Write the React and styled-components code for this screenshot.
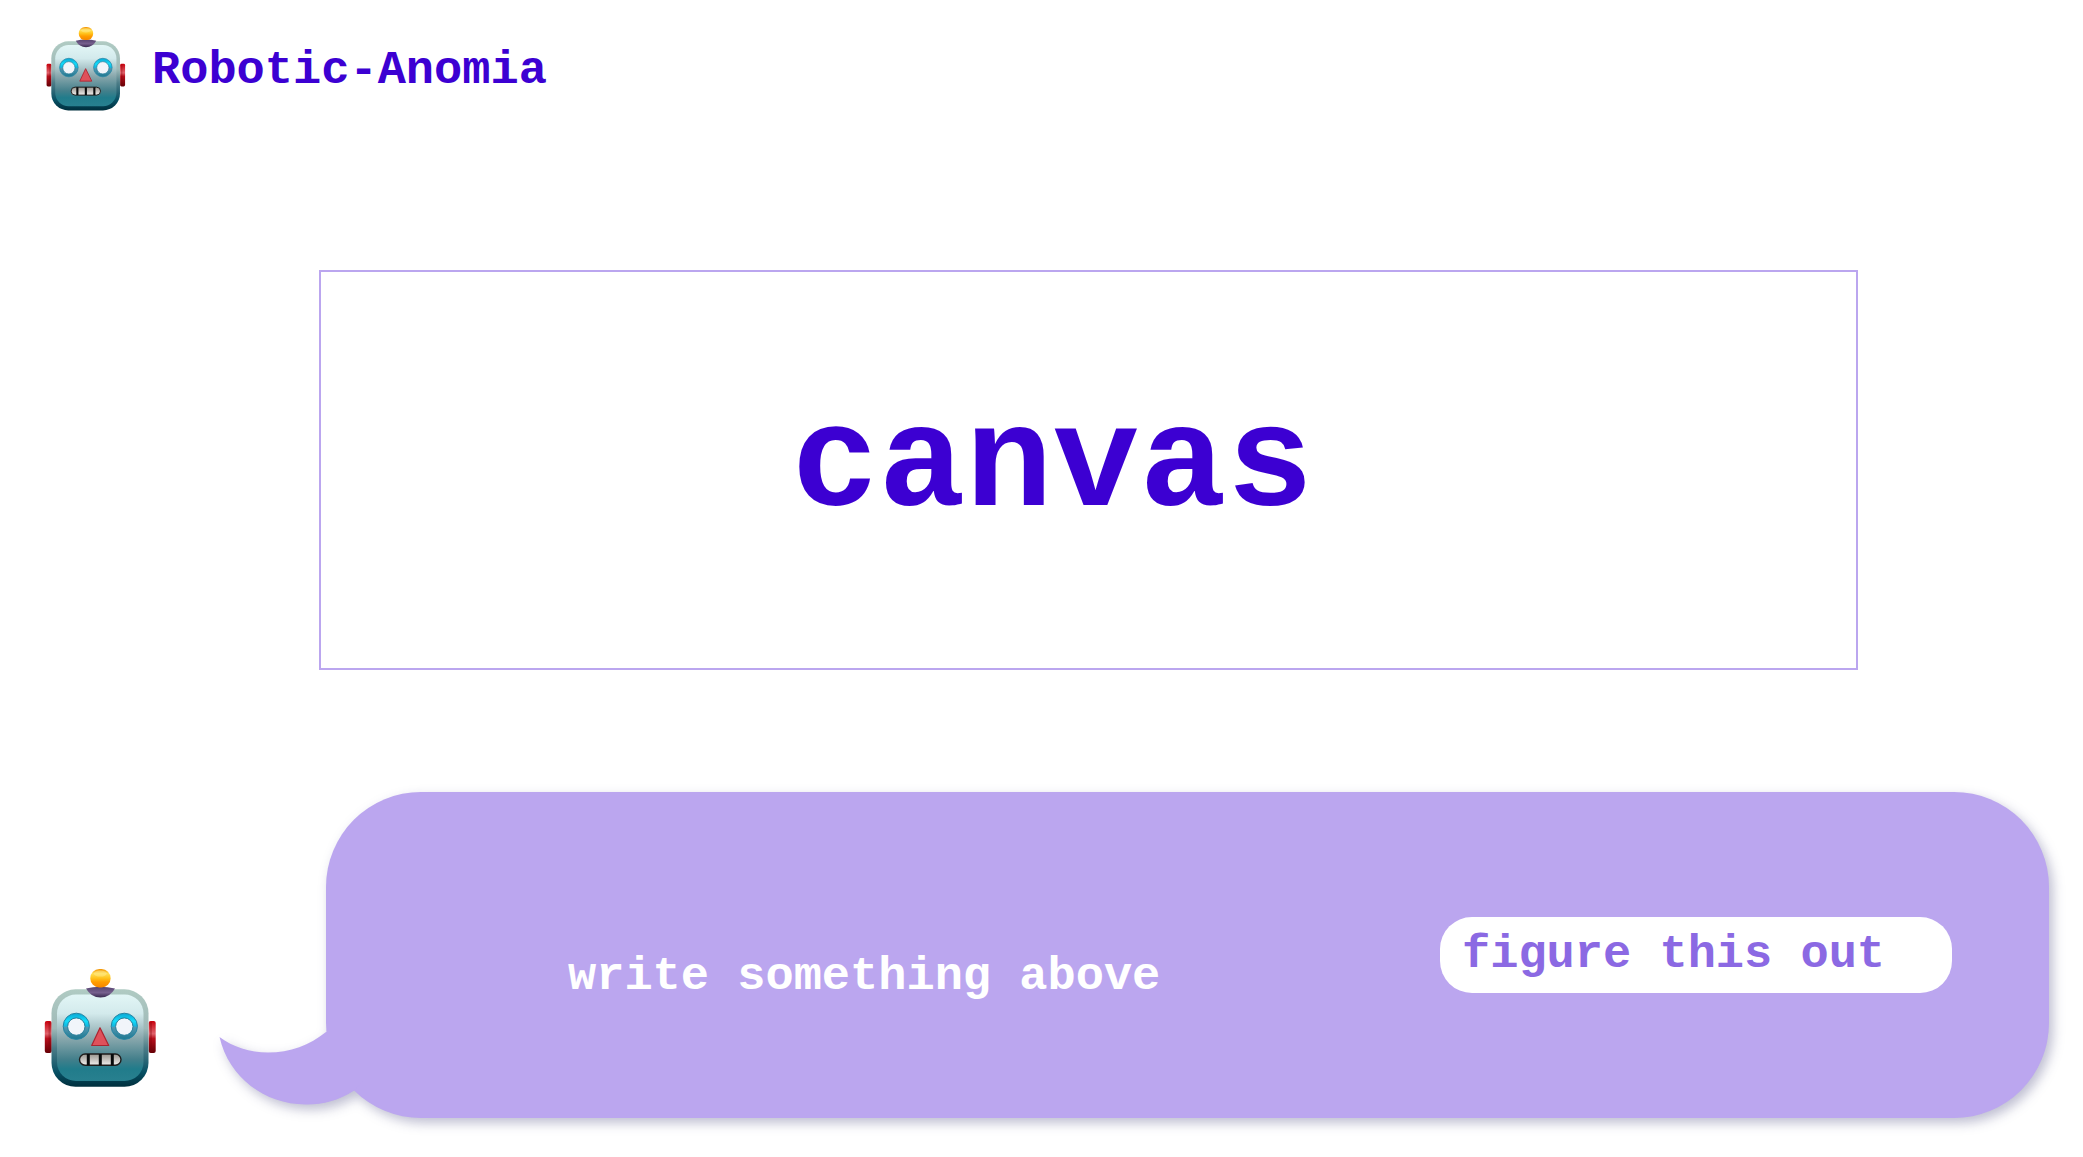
import React, { useId } from "react";
import styled, { createGlobalStyle } from "styled-components";

const GlobalStyle = createGlobalStyle`
  *, *::before, *::after { box-sizing: border-box; }
  body {
    margin: 0;
    background: #ffffff;
    color: #3c00d2;
    font-family: "Liberation Mono", "Courier New", monospace;
    font-weight: 700;
  }
`;

const Page = styled.div`
  min-height: 100vh;
  display: flex;
  flex-direction: column;
`;

const Header = styled.header`
  display: flex;
  align-items: center;
  gap: 26px;
  padding: 27px 46px 0;
`;

const Title = styled.h1`
  margin: 0;
  padding-top: 4px;
  font-size: 47px;
  line-height: 52px;
`;

const Robot = styled.svg`
  display: block;
  flex: none;
  width: ${(p) => p.$width}px;
  height: auto;
`;

const Main = styled.main`
  flex: 1;
  display: flex;
  flex-direction: column;
`;

const Canvas = styled.section`
  display: flex;
  align-items: center;
  justify-content: center;
  min-height: 400px;
  margin: 159px 225px 0 319px;
  padding: 0 72px 6px 0;
  border: 2px solid #bba6ef;
`;

const CanvasLabel = styled.h2`
  margin: 0;
  font-size: 145px;
  line-height: 160px;
`;

const Composer = styled.form`
  display: flex;
  align-items: flex-end;
  gap: 169px;
  margin-top: 122px;
  padding: 0 34px 39px 44px;
`;

const Avatar = styled.div`
  flex: none;
  padding-bottom: 31px;
`;

const Bubble = styled.div`
  position: relative;
  flex: 1;
  display: flex;
  align-items: flex-start;
  justify-content: space-between;
  min-height: 326px;
  padding: 125px 97px 0 242px;
  border-radius: 95px;
  background: #bba6ef;
  filter: drop-shadow(4px 5px 6px rgba(20, 20, 90, 0.28));
`;

const Tail = styled.svg`
  position: absolute;
  left: -107px;
  bottom: 13px;
  width: 144px;
  height: 74px;
`;

const Hint = styled.p`
  margin: 0;
  padding-top: 34px;
  color: #ffffff;
  font-size: 47px;
  line-height: 52px;
`;

const Submit = styled.button`
  width: 512px;
  padding: 12px 22px;
  border: 0;
  border-radius: 32px;
  background: #ffffff;
  color: #8b69e3;
  font: inherit;
  font-size: 47px;
  line-height: 52px;
  text-align: left;
  cursor: pointer;
`;

function RobotFace({ width }) {
  const id = useId().replace(/[^a-zA-Z0-9]/g, "");
  const ref = (name) => `url(#${id}${name})`;
  return (
    <Robot $width={width} viewBox="0 0 113 118" aria-hidden="true">
      <defs>
        <linearGradient id={`${id}rim`} x1="0" y1="0" x2="0" y2="1">
          <stop offset="0" stopColor="#b0cbc3" />
          <stop offset="0.4" stopColor="#9fb9b8" />
          <stop offset="0.6" stopColor="#4d7d88" />
          <stop offset="0.85" stopColor="#075064" />
          <stop offset="1" stopColor="#002f3d" />
        </linearGradient>
        <linearGradient id={`${id}face`} x1="0" y1="0" x2="0" y2="1">
          <stop offset="0" stopColor="#e2f6f6" />
          <stop offset="0.22" stopColor="#d3eaec" />
          <stop offset="0.5" stopColor="#8ba9ae" />
          <stop offset="0.75" stopColor="#437f8b" />
          <stop offset="0.86" stopColor="#217c8b" />
          <stop offset="1" stopColor="#28808f" />
        </linearGradient>
        <linearGradient id={`${id}ear`} x1="0" y1="0" x2="0" y2="1">
          <stop offset="0" stopColor="#c8000c" />
          <stop offset="0.4" stopColor="#e0636c" />
          <stop offset="0.55" stopColor="#b60e1b" />
          <stop offset="1" stopColor="#650006" />
        </linearGradient>
        <linearGradient id={`${id}ball`} x1="0" y1="0" x2="0" y2="1">
          <stop offset="0" stopColor="#f39200" />
          <stop offset="0.25" stopColor="#ffdf55" />
          <stop offset="0.5" stopColor="#ffc21c" />
          <stop offset="0.7" stopColor="#ff9d00" />
          <stop offset="1" stopColor="#f48500" />
        </linearGradient>
        <linearGradient id={`${id}cap`} x1="0" y1="0" x2="0" y2="1">
          <stop offset="0" stopColor="#55436f" />
          <stop offset="0.55" stopColor="#76608e" />
          <stop offset="1" stopColor="#36284e" />
        </linearGradient>
        <linearGradient id={`${id}eye`} x1="0" y1="0" x2="0" y2="1">
          <stop offset="0" stopColor="#0aa5d2" />
          <stop offset="0.3" stopColor="#13dcfa" />
          <stop offset="0.49" stopColor="#10b7e0" />
          <stop offset="0.54" stopColor="#5298b2" />
          <stop offset="1" stopColor="#1d7890" />
        </linearGradient>
        <linearGradient id={`${id}teeth`} x1="0" y1="0" x2="0" y2="1">
          <stop offset="0" stopColor="#99958e" />
          <stop offset="1" stopColor="#f1efed" />
        </linearGradient>
      </defs>
      <rect x="0.8" y="52" width="7" height="32" rx="2" fill={ref("ear")} />
      <rect x="104.7" y="52" width="7" height="32" rx="2" fill={ref("ear")} />
      <path d="M5.5 53v30M107 53v30" stroke="#7c0008" strokeWidth="2" opacity="0.3" />
      <rect x="7.5" y="20.3" width="97" height="97.5" rx="24" fill={ref("rim")} />
      <rect x="13" y="25.5" width="86.5" height="86.5" rx="19" fill={ref("face")} />
      <path d="M42 19.5Q56 16 71 19.5Q66 28.5 56.5 28.5Q47 28.5 42 19.5Z" fill={ref("cap")} />
      <rect x="46.3" y="0" width="20.3" height="18.5" rx="9" fill={ref("ball")} />
      <ellipse cx="56.3" cy="4.6" rx="6.5" ry="3" fill="#fff0a0" opacity="0.4" />
      {[32.3, 80.3].map((cx) => (
        <g key={cx}>
          <circle cx={cx} cy="57.3" r="13.1" fill={ref("eye")} stroke="#2484a3" strokeWidth="1" />
          <circle cx={cx} cy="57.6" r="8.7" fill="#f1f5fa" stroke="#287d99" strokeWidth="1" />
        </g>
      ))}
      <path d="M56 58.8L47.7 76.5H64.7Z" fill="#df515b" stroke="#aa2430" strokeWidth="1.2" strokeLinejoin="round" />
      <rect x="35.5" y="85" width="41.5" height="11.2" rx="5.6" fill={ref("teeth")} stroke="#1f1d1c" strokeWidth="1.4" />
      <path d="M44.3 85v11.2M56.3 85v11.2M68.3 85v11.2" stroke="#080a0b" strokeWidth="3" />
    </Robot>
  );
}

export default function App() {
  return (
    <>
      <GlobalStyle />
      <Page>
        <Header>
          <RobotFace width={80} />
          <Title>Robotic-Anomia</Title>
        </Header>
        <Main>
          <Canvas>
            <CanvasLabel>canvas</CanvasLabel>
          </Canvas>
          <Composer onSubmit={(event) => event.preventDefault()}>
            <Avatar>
              <RobotFace width={113} />
            </Avatar>
            <Bubble>
              <Tail viewBox="0 0 144 74" aria-hidden="true">
                <path
                  d="M0.5 6C14 16 31 21.5 49 21.5C71 21.5 91 14 107 1H144V50L134.5 60C119 70 102 74 86 73.5C46 73 10 47 0.5 6Z"
                  fill="#bba6ef"
                />
              </Tail>
              <Hint>write something above</Hint>
              <Submit type="submit">figure this out</Submit>
            </Bubble>
          </Composer>
        </Main>
      </Page>
    </>
  );
}
